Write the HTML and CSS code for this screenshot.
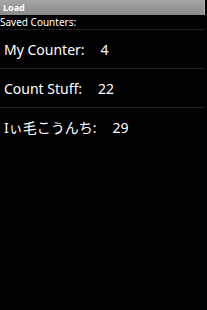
FILE: index.html
```html
<!DOCTYPE html>
<html>
<head>
<meta charset="utf-8">
<link rel="stylesheet" href="styles.css">
</head>
<body>
<div class="screen">
  <div class="titlebar">Load</div>
  <div class="header">Saved Counters:</div>
  <ul class="list">
    <li class="row"><span class="name">My Counter:</span><span class="value">4</span></li>
    <li class="row"><span class="name">Count Stuff:</span><span class="value">22</span></li>
    <li class="row"><span class="name">Iぃ毛こうんち:</span><span class="value">29</span></li>
  </ul>
</div>
</body>
</html>
```
FILE: styles.css
```css
html, body {
  margin: 0;
  padding: 0;
  background: #000;
}
.screen {
  width: 207px;
  height: 310px;
  background: #000;
  color: #fff;
  font-family: "Noto Sans", "Noto Sans CJK JP", sans-serif;
  overflow: hidden;
}
.titlebar {
  width: 201px;
  height: 15px;
  padding-left: 3px;
  background: linear-gradient(#a6a6a6, #8a8a8a);
  border-right: 1px solid #b0b0b0;
  font-size: 9px;
  font-weight: bold;
  line-height: 15px;
  color: #fff;
}
.header {
  height: 14px;
  font-size: 10px;
  line-height: 14px;
  border-bottom: 1px solid #1e1e1e;
  width: 205px;
}
.list {
  list-style: none;
  margin: 0;
  padding: 0;
}
.row {
  display: flex;
  align-items: center;
  height: 38px;
  padding-left: 4px;
  font-size: 14px;
  border-bottom: 1px solid #1e1e1e;
  width: 201px;
}
.row:last-child {
  border-bottom: none;
}
.value {
  margin-left: 16px;
}
```
